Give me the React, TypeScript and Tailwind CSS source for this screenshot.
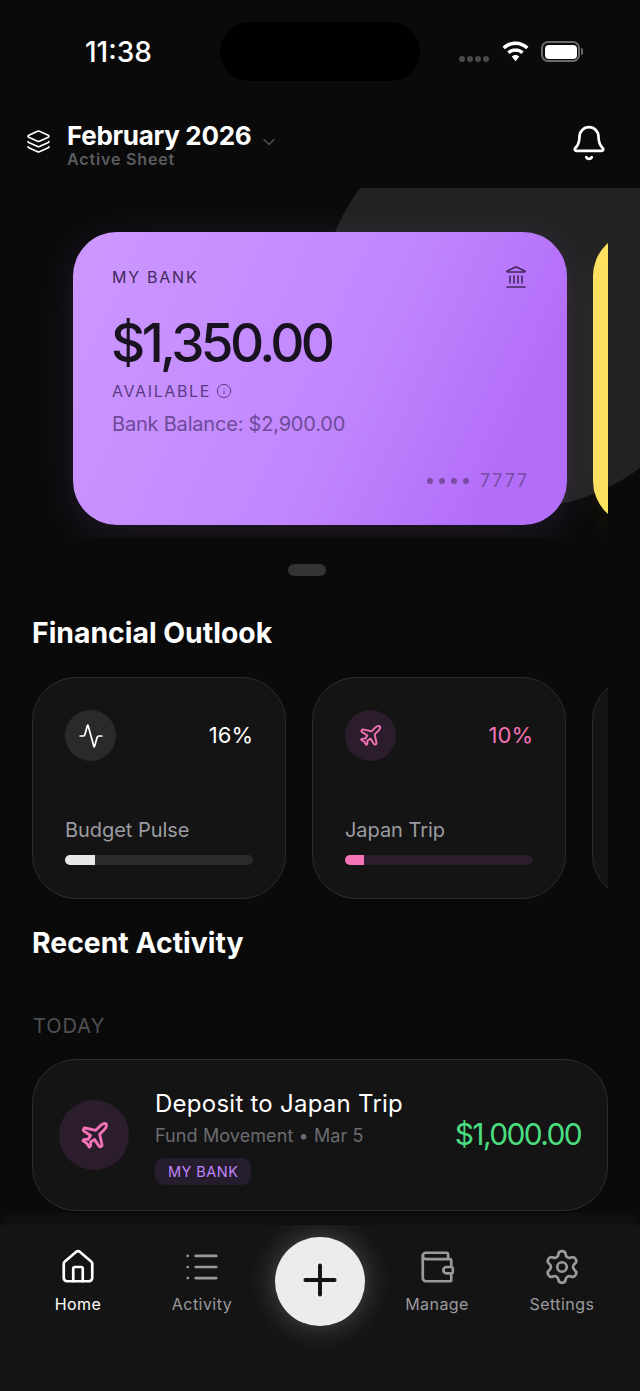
import { Activity, Bell, ChevronDown, House, Info, Landmark, Layers, List, Plane, Plus, Settings, Wallet } from "lucide-react";

function StatusBar() {
  return (
    <div className="relative h-[119px] shrink-0">
      <div className="absolute left-[85px] top-[35px] text-[28px] leading-[34px] font-medium text-white">11:38</div>
      <div className="absolute left-[220px] top-[22px] h-[59px] w-[200px] rounded-full bg-black" />
      <div className="absolute left-[459px] top-[56px] flex gap-[2px]">
        {[0, 1, 2, 3].map((i) => (
          <div key={i} className="h-[6px] w-[6px] rounded-full bg-[#4a4a4a]" />
        ))}
      </div>
      <svg className="absolute left-[502px] top-[41px]" width="27" height="21" viewBox="0 0 27 21" fill="white">
        <path d="M13.5 0.5C8.4 0.5 3.9 2.5 0.5 5.8L2.9 8.3C5.7 5.6 9.4 4 13.5 4s7.8 1.6 10.6 4.3l2.4-2.5C23.1 2.5 18.6 0.5 13.5 0.5z" />
        <path d="M13.5 7.2c-3.2 0-6.1 1.3-8.2 3.3l2.4 2.5c1.5-1.5 3.5-2.3 5.8-2.3s4.3.9 5.8 2.3l2.4-2.5c-2.1-2-5-3.3-8.2-3.3z" />
        <path d="M13.5 14c-1.5 0-2.8.6-3.8 1.5l3.8 4.8 3.8-4.8c-1-.9-2.3-1.5-3.8-1.5z" />
      </svg>
      <div className="absolute left-[541px] top-[41px] flex items-center">
        <div className="h-[21px] w-[39px] rounded-[7px] border-2 border-[#6a6a6a] p-[1.5px]">
          <div className="h-full w-full rounded-[4px] bg-white" />
        </div>
        <div className="ml-[1px] h-[7px] w-[2px] rounded-r-full bg-[#6a6a6a]" />
      </div>
    </div>
  );
}

function Header() {
  return (
    <div className="flex h-[69px] shrink-0 items-start pl-[26px] pr-[32px]">
      <Layers className="mt-[10px] h-[25px] w-[25px] text-white" strokeWidth={1.6} />
      <div className="ml-[16px]">
        <div className="mt-[1px] flex h-[32px] items-center">
          <span className="text-[26px] leading-[32px] font-bold tracking-[-0.3px] text-white">February 2026</span>
          <ChevronDown className="ml-[8px] mt-[12px] h-[20px] w-[20px] text-[#55555a]" strokeWidth={1.5} />
        </div>
        <div className="mt-[-1px] text-[16px] leading-[16px] font-semibold tracking-[0.85px] text-[#5c5c60]">Active Sheet</div>
      </div>
      <Bell className="ml-auto mt-[5px] h-[38px] w-[38px] text-white" strokeWidth={1.7} />
    </div>
  );
}

function BankCard() {
  return (
    <div className="relative flex h-[293px] w-[494px] shrink-0 flex-col rounded-[44px] bg-[linear-gradient(115deg,#cc98ff_0%,#c186fd_55%,#b36ef9_85%)] px-[39px] pt-[33px] shadow-[0_8px_44px_rgba(192,132,252,0.13)]">
      <div className="flex items-start justify-between">
        <span className="text-[16px] leading-[24px] tracking-[1.75px] text-[#43275f]">MY BANK</span>
        <Landmark className="h-[24px] w-[24px] text-[#43275f]" strokeWidth={1.6} />
      </div>
      <div className="ml-[-1px] mt-[24px] text-[53px] leading-[60px] font-medium tracking-[-3.6px] text-[#191320]">$1,350.00</div>
      <div className="mt-[6px] flex items-center">
        <span className="text-[16px] leading-[24px] tracking-[1.6px] text-[#5d3a86]">AVAILABLE</span>
        <Info className="ml-[5px] h-[16px] w-[16px] text-[#5d3a86]" strokeWidth={1.5} />
      </div>
      <div className="mt-[7px] text-[20px] leading-[28px] tracking-[-0.2px] text-[#6e4a98]">Bank Balance: $2,900.00</div>
      <div className="absolute bottom-[32px] right-[38px] flex items-center">
        <div className="flex gap-[6px]">
          {[0, 1, 2, 3].map((i) => (
            <div key={i} className="h-[6px] w-[6px] rounded-full bg-[#7a4da3]" />
          ))}
        </div>
        <span className="ml-[11px] text-[18px] leading-[24px] tracking-[1.8px] text-[#7a4da3]">7777</span>
      </div>
    </div>
  );
}

function Carousel() {
  return (
    <div className="relative h-[350px] shrink-0 overflow-hidden">
      <div className="absolute left-[320px] top-[-80px] h-[400px] w-[400px] rounded-full bg-[#222222]" />
      <div className="relative ml-[32px] flex h-full w-[576px] gap-[26px] overflow-hidden pl-[41px] pt-[44px]">
        <BankCard />
        <div className="h-[293px] w-[494px] shrink-0 rounded-[44px] bg-[#fde15f] shadow-[0_8px_36px_rgba(253,224,71,0.06)]" />
      </div>
    </div>
  );
}

function OutlookCard({
  icon,
  pct,
  label,
  circle,
  text,
  track,
  fill,
  width,
}: {
  icon: React.ReactNode;
  pct: string;
  label: string;
  circle: string;
  text: string;
  track: string;
  fill: string;
  width: string;
}) {
  return (
    <div className="flex h-[222px] w-[254px] shrink-0 flex-col rounded-[44px] border border-[#2c2c2c] bg-[#141414] px-[32px] pt-[32px]">
      <div className="flex items-center justify-between">
        <div className={`flex h-[51px] w-[51px] items-center justify-center rounded-full ${circle}`}>{icon}</div>
        <span className={`mb-[2px] text-[22px] leading-[28px] ${text}`}>{pct}</span>
      </div>
      <div className="mt-[55px] text-[20px] leading-[28px] tracking-[-0.05px] text-[#9c9ca0]">{label}</div>
      <div className={`mt-[11px] h-[10px] w-full overflow-hidden rounded-full ${track}`}>
        <div className={`h-full ${width} ${fill}`} />
      </div>
    </div>
  );
}

function Outlook() {
  return (
    <div className="mx-[32px] flex gap-[26px] overflow-hidden">
      <OutlookCard
        icon={<Activity className="h-[26px] w-[26px] text-white" strokeWidth={1.6} />}
        pct="16%"
        label="Budget Pulse"
        circle="bg-[#2a2a2a]"
        text="text-white"
        track="bg-[#2a2a2a]"
        fill="bg-[#e8e8e8]"
        width="w-[16%]"
      />
      <OutlookCard
        icon={<Plane className="h-[25px] w-[25px] text-[#f472b6]" strokeWidth={1.8} />}
        pct="10%"
        label="Japan Trip"
        circle="bg-[#2c1d2c]"
        text="text-[#f472b6]"
        track="bg-[#2c1d2c]"
        fill="bg-[#f472b6]"
        width="w-[10%]"
      />
      <div className="h-[222px] w-[254px] shrink-0 rounded-[44px] border border-[#2c2c2c] bg-[#141414]" />
    </div>
  );
}

function Transaction() {
  return (
    <div className="mx-[32px] mt-[19px] flex h-[152px] items-center rounded-[44px] border border-[#2c2c2c] bg-[#141414] pl-[26px] pr-[26px]">
      <div className="flex h-[70px] w-[70px] shrink-0 items-center justify-center rounded-full bg-[#2c1d2c]">
        <Plane className="h-[31px] w-[31px] text-[#f472b6]" strokeWidth={2.2} />
      </div>
      <div className="ml-[26px] mt-[4px] flex flex-col items-start">
        <div className="text-[24px] leading-[30px] tracking-[0.25px] text-white">Deposit to Japan Trip</div>
        <div className="mt-[4px] text-[18px] leading-[26px] tracking-[0.1px] text-[#6c6c70]">Fund Movement • Mar 5</div>
        <div className="mt-[8.5px] rounded-[9px] bg-[#251c2e] px-[13px] py-[3px] text-[14.5px] leading-[21px] tracking-[0.45px] text-[#c084fc]">MY BANK</div>
      </div>
      <div className="mb-[2px] ml-auto text-[30px] leading-[36px] font-normal tracking-[-1.65px] text-[#4ade80]">$1,000.00</div>
    </div>
  );
}

function TabItem({ icon, label, active }: { icon: React.ReactNode; label: string; active?: boolean }) {
  return (
    <div className={`flex flex-col items-center ${active ? "text-white" : "text-[#9a9a9e]"}`}>
      {icon}
      <span className="mt-[6px] text-[16px] leading-[24px] tracking-[0.45px]">{label}</span>
    </div>
  );
}

function TabBar() {
  return (
    <div className="relative grid h-[166px] shrink-0 grid-cols-[124px_124px_112px_122px_128px] bg-[#141414] pl-[16px] pt-[23px]">
      <div className="absolute left-0 right-0 top-[-12px] h-[12px] rounded-t-[36px] bg-[#0f0f0f]" />
      <TabItem active label="Home" icon={<House className="h-[38px] w-[38px]" strokeWidth={1.7} />} />
      <TabItem label="Activity" icon={<List className="h-[38px] w-[38px]" strokeWidth={1.7} />} />
      <div className="flex justify-center">
        <div className="mt-[-11px] flex h-[89px] w-[90px] items-center justify-center rounded-full bg-[#ececec] pb-[3px] shadow-[0_0_30px_rgba(255,255,255,0.25)]">
          <Plus className="h-[50px] w-[50px] text-[#141414]" strokeWidth={1.9} />
        </div>
      </div>
      <TabItem label="Manage" icon={<Wallet className="h-[38px] w-[38px]" strokeWidth={1.7} />} />
      <TabItem label="Settings" icon={<Settings className="h-[38px] w-[38px]" strokeWidth={1.7} />} />
    </div>
  );
}

export default function App() {
  return (
    <div className="flex h-[1391px] w-[640px] flex-col overflow-hidden bg-[#0a0a0a] font-['Inter',sans-serif]">
      <StatusBar />
      <Header />
      <Carousel />
      <div className="ml-[288px] mt-[26px] h-[12px] w-[38px] shrink-0 rounded-full bg-[#333333]" />
      <div className="min-h-0 flex-1 overflow-hidden">
        <h2 className="ml-[32px] mt-[39px] text-[28.35px] leading-[36px] font-bold text-white">Financial Outlook</h2>
        <div className="mt-[26px]">
          <Outlook />
        </div>
        <h2 className="ml-[32px] mt-[26px] text-[28.35px] leading-[36px] font-bold text-white">Recent Activity</h2>
        <div className="ml-[33px] mt-[51px] text-[20px] leading-[28px] tracking-[1px] text-[#505054]">TODAY</div>
        <Transaction />
      </div>
      <TabBar />
    </div>
  );
}
